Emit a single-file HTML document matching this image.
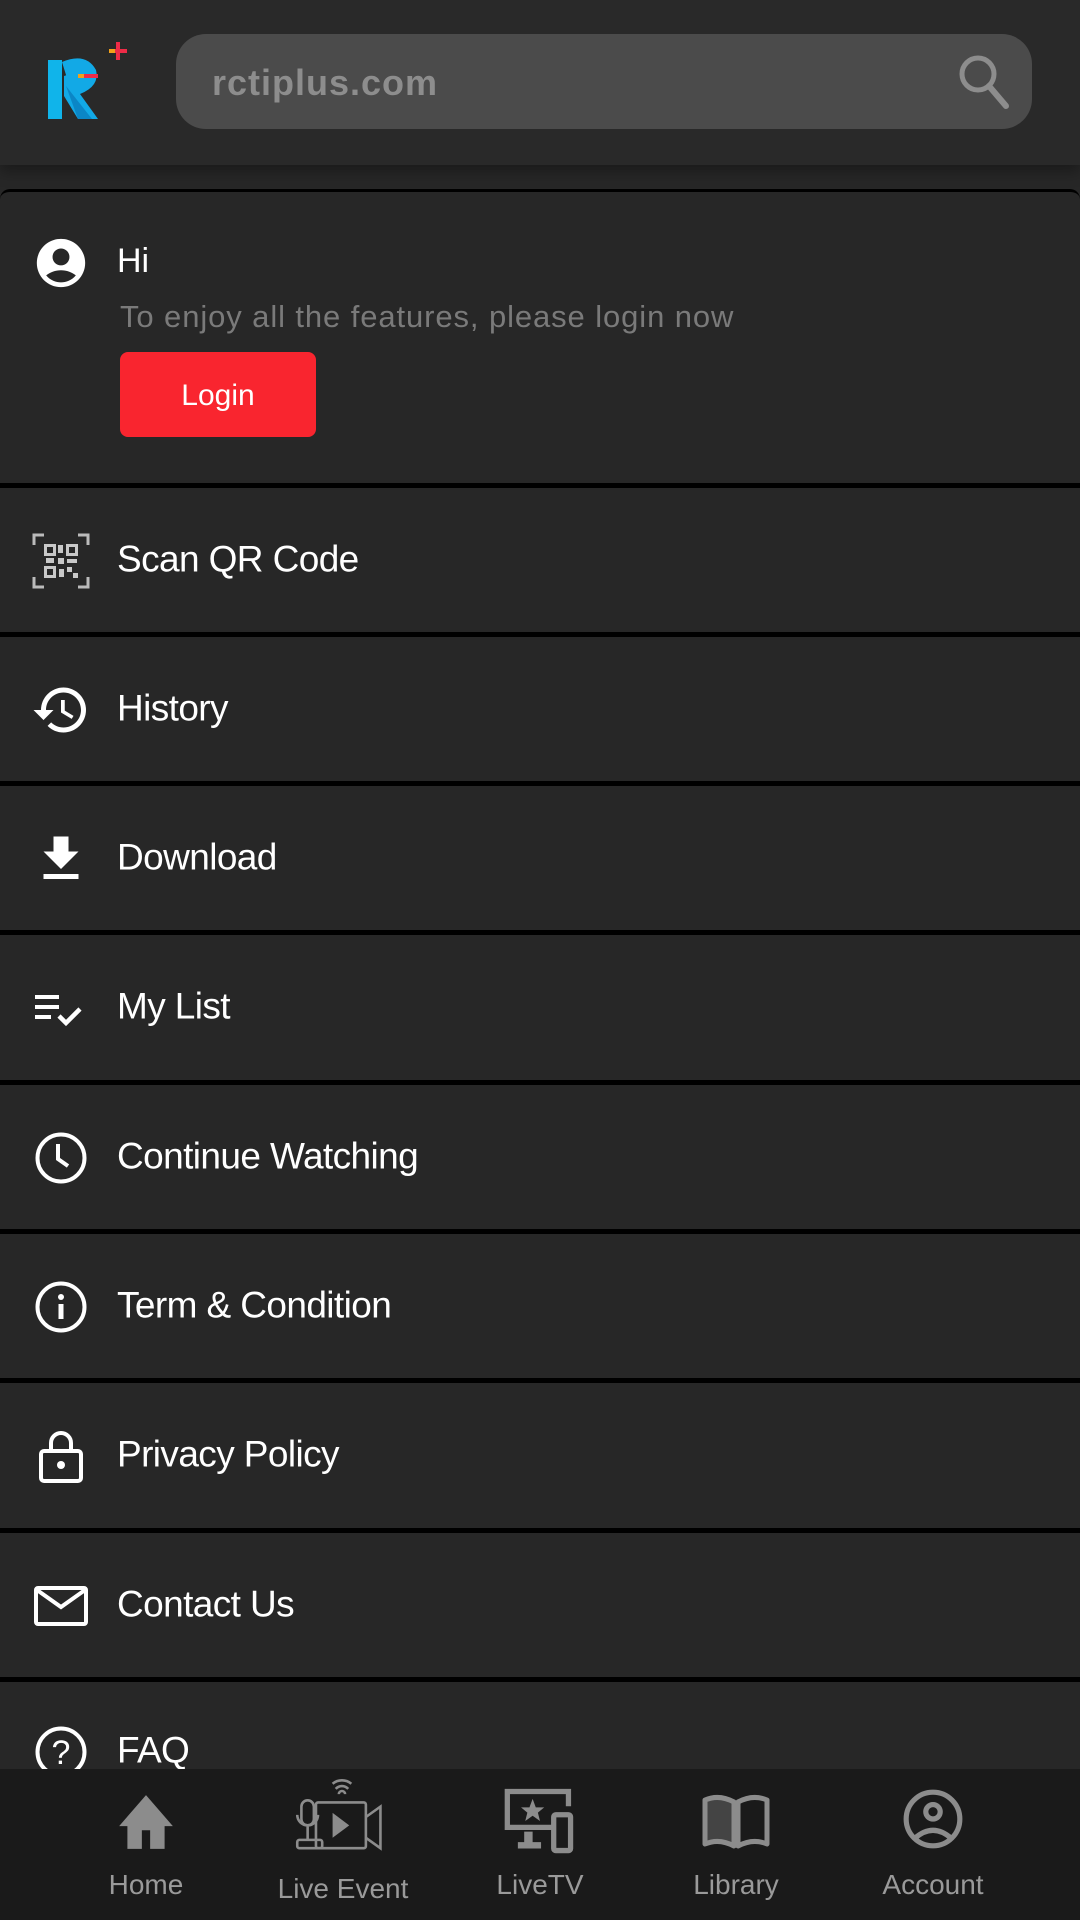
<!DOCTYPE html>
<html><head><meta charset="utf-8">
<style>
*{margin:0;padding:0;box-sizing:border-box}
body{width:1080px;height:1920px;overflow:hidden;background:#272727;font-family:"Liberation Sans",sans-serif;position:relative}
.hdr{position:absolute;left:0;top:0;width:1080px;height:165px;background:#292929;box-shadow:0 6px 14px rgba(0,0,0,.35);z-index:2}
.search{position:absolute;left:176px;top:34px;width:856px;height:95px;border-radius:30px;background:#4b4b4b}
.search span{position:absolute;left:36px;top:28px;font-size:36px;font-weight:bold;color:#8d8d8d;letter-spacing:1px}
.panel{position:absolute;left:0;top:189px;width:1080px;height:1600px;background:#272727;border-top:3px solid #000;border-radius:10px 10px 0 0}
.div{position:absolute;left:0;width:1080px;height:5px;background:#000}
.row{position:absolute;left:0;width:1080px;height:145px}
.row .t{position:absolute;left:117px;top:50%;transform:translateY(-54%);font-size:37px;letter-spacing:-0.6px;color:#fff}
.row svg{position:absolute;left:31px;top:50%;transform:translateY(-50%)}
.nav{position:absolute;left:0;top:1769px;width:1080px;height:151px;background:#1a1a1a}
.ni{position:absolute;top:0;width:200px;margin-left:-100px;text-align:center}
.ni svg{position:absolute;left:50%;transform:translateX(-50%)}
.ni span{position:absolute;left:0;width:200px;top:100px;font-size:28px;color:#9a9a9a;text-align:center}
</style></head><body>
<div class="hdr">
 <svg style="position:absolute;left:46px;top:40px" width="86" height="82" viewBox="0 0 86 82">
  <path d="M2 20 L16 20 L16 79 L2 79 Z" fill="#10b4ea"/>
  <path d="M16 22 Q40 12 50 30 Q54 46 34 54 L52 79 L32 79 L18 56 L18 36 Q34 30 32 42 L24 48 Z" fill="#12a9e6"/>
  <path d="M20 46 L46 79 L32 79 Z" fill="#0b86c6"/>
  <rect x="32" y="34" width="20" height="4" fill="#f2a11a"/>
  <rect x="38" y="34" width="14" height="4" fill="#ee2b47"/>
  <rect x="70" y="2" width="4" height="18" fill="#ee2b47"/>
  <rect x="63" y="9" width="18" height="4" fill="#ee2b47"/>
  <rect x="63" y="9" width="6" height="4" fill="#f2a11a"/>
 </svg>
 <div class="search"><span>rctiplus.com</span>
  <svg style="position:absolute;right:20px;top:18px" width="56" height="60" viewBox="0 0 56 60"><circle cx="22" cy="22" r="16" fill="none" stroke="#8d8d8d" stroke-width="5"/><path d="M33 34 L50 54" stroke="#8d8d8d" stroke-width="6" stroke-linecap="round"/></svg>
 </div>
</div>
<div class="panel"></div>
<svg style="position:absolute;left:32px;top:234px" width="58" height="58" viewBox="0 0 24 24"><path fill="#fff" d="M12 2C6.48 2 2 6.48 2 12s4.48 10 10 10 10-4.48 10-10S17.52 2 12 2zm0 4c1.93 0 3.5 1.57 3.5 3.5S13.93 13 12 13s-3.5-1.57-3.5-3.5S10.07 6 12 6zm0 14c-2.03 0-4.43-.82-6.14-2.88C7.55 15.8 9.68 15 12 15s4.45.8 6.14 2.12C16.43 19.18 14.03 20 12 20z"/></svg>
<div style="position:absolute;left:117px;top:242px;font-size:34px;color:#fff">Hi</div>
<div style="position:absolute;left:120px;top:299px;font-size:31px;letter-spacing:0.9px;color:#7a7a7a">To enjoy all the features, please login now</div>
<div style="position:absolute;left:120px;top:352px;width:196px;height:85px;background:#f9252f;border-radius:8px;color:#fff;font-size:30px;text-align:center;line-height:88px">Login</div>

<div class="div" style="top:483px"></div>
<div class="row" style="top:488px"><svg width="60" height="60" viewBox="0 0 60 60"><g fill="none" stroke="#bbb" stroke-width="3"><path d="M3 14V4h10M47 4h10v10M57 46v10H47M13 56H3V46"/></g><g fill="#c8c8c8"><rect x="13" y="13" width="12" height="12"/><rect x="35" y="13" width="12" height="12"/><rect x="13" y="35" width="12" height="12"/><rect x="27" y="27" width="6" height="6"/><rect x="36" y="36" width="5" height="5"/><rect x="42" y="42" width="5" height="5"/><rect x="27" y="14" width="5" height="8"/><rect x="15" y="27" width="8" height="5"/><rect x="36" y="28" width="10" height="4"/><rect x="28" y="38" width="5" height="8"/></g><g fill="#272727"><rect x="16" y="16" width="6" height="6"/><rect x="38" y="16" width="6" height="6"/><rect x="16" y="38" width="6" height="6"/></g></svg><span class="t">Scan QR Code</span></div>
<div class="div" style="top:632px"></div>
<div class="row" style="top:637px"><svg width="60" height="60" viewBox="0 0 24 24"><path fill="#fff" d="M13 3a9 9 0 0 0-9 9H1l3.89 3.89.07.14L9 12H6c0-3.870 3.13-7 7-7s7 3.13 7 7-3.13 7-7 7c-1.93 0-3.680-.79-4.940-2.060l-1.420 1.420A8.954 8.954 0 0 0 13 21a9 9 0 0 0 0-18zm-1 5v5l4.28 2.54.72-1.21-3.5-2.08V8H12z"/></svg><span class="t">History</span></div>
<div class="div" style="top:781px"></div>
<div class="row" style="top:786px"><svg width="60" height="60" viewBox="0 0 24 24"><path fill="#fff" d="M19 9h-4V3H9v6H5l7 7 7-7zM5 18v2h14v-2H5z"/></svg><span class="t">Download</span></div>
<div class="div" style="top:930px"></div>
<div class="row" style="top:935px"><svg width="60" height="60" viewBox="0 0 60 60"><g fill="#fff"><rect x="4" y="17" width="24" height="4"/><rect x="4" y="27" width="24" height="4"/><rect x="4" y="37" width="16" height="4"/></g><path d="M28 38l7 7 14-14" fill="none" stroke="#fff" stroke-width="4.5"/></svg><span class="t">My List</span></div>
<div class="div" style="top:1080px"></div>
<div class="row" style="top:1085px"><svg width="60" height="60" viewBox="0 0 60 60"><circle cx="30" cy="30" r="23.5" fill="none" stroke="#fff" stroke-width="4"/><path d="M27 16v15l10 7" fill="none" stroke="#fff" stroke-width="4"/></svg><span class="t">Continue Watching</span></div>
<div class="div" style="top:1229px"></div>
<div class="row" style="top:1234px"><svg width="60" height="60" viewBox="0 0 60 60"><circle cx="30" cy="30" r="23.5" fill="none" stroke="#fff" stroke-width="4"/><rect x="27.5" y="27" width="5" height="15" fill="#fff"/><circle cx="30" cy="20" r="3" fill="#fff"/></svg><span class="t">Term &amp; Condition</span></div>
<div class="div" style="top:1378px"></div>
<div class="row" style="top:1383px"><svg width="60" height="60" viewBox="0 0 60 60"><path d="M20 25v-8a10 10 0 0 1 20 0v8" fill="none" stroke="#fff" stroke-width="4"/><rect x="10" y="25" width="40" height="30" rx="3" fill="none" stroke="#fff" stroke-width="4"/><circle cx="30" cy="39" r="4" fill="#fff"/></svg><span class="t">Privacy Policy</span></div>
<div class="div" style="top:1528px"></div>
<div class="row" style="top:1533px"><svg width="60" height="60" viewBox="0 0 60 60"><rect x="5" y="12" width="50" height="36" rx="2" fill="none" stroke="#fff" stroke-width="4"/><path d="M6 14l24 17 24-17" fill="none" stroke="#fff" stroke-width="4"/></svg><span class="t">Contact Us</span></div>
<div class="div" style="top:1677px"></div>
<div class="row" style="top:1682px"><svg style="top:70px" width="60" height="60" viewBox="0 0 60 60"><circle cx="30" cy="30" r="23.5" fill="none" stroke="#fff" stroke-width="4"/><text x="30" y="42" font-size="34" fill="#fff" text-anchor="middle" font-family="Liberation Sans">?</text></svg><span class="t" style="top:70px">FAQ</span></div>

<div class="nav">
 <div class="ni" style="left:146px"><svg style="top:22px" width="64" height="62" viewBox="0 0 60 60"><path d="M30 4L4 34h8v22h14V38h8v18h14V34h8z" fill="#8c8c8c"/></svg><span>Home</span></div>
 <div class="ni" style="left:343px"><svg style="top:6px" width="104" height="84" viewBox="0 0 100 80"><g fill="none" stroke="#8c8c8c" stroke-width="2.5"><path d="M40 8a14 14 0 0 1 18 0M43 13a8 8 0 0 1 12 0M46 18a3 3 0 0 1 6 0"/><rect x="24" y="26" width="48" height="44" rx="2"/><path d="M72 40l14-10v40l-14-10"/><rect x="10" y="24" width="12" height="24" rx="6"/><path d="M6 38a10 10 0 0 0 20 0M16 48v14"/><rect x="6" y="62" width="24" height="8" rx="2"/></g><path d="M40 36l16 12-16 12z" fill="#8c8c8c"/></svg><span style="top:104px">Live Event</span></div>
 <div class="ni" style="left:540px"><svg style="top:16px" width="78" height="70" viewBox="0 0 74 66"><g fill="none" stroke="#8c8c8c" stroke-width="5"><path d="M48 40H6V6h58v14"/><rect x="50" y="28" width="16" height="34" rx="2"/></g><path d="M22 44h8v10h8v6H16v-6h6z" fill="#8c8c8c"/><path d="M30 13l3 8h8l-6 5 2 8-7-5-7 5 2-8-6-5h8z" fill="#8c8c8c"/></svg><span>LiveTV</span></div>
 <div class="ni" style="left:736px"><svg style="top:24px" width="70" height="58" viewBox="0 0 70 56"><path d="M4 6q14-6 29 2v44q-15-8-29-2z" fill="#444" stroke="#8c8c8c" stroke-width="5" stroke-linejoin="round"/><path d="M66 6q-14-6-29 2v44q15-8 29-2z" fill="none" stroke="#8c8c8c" stroke-width="5" stroke-linejoin="round"/></svg><span>Library</span></div>
 <div class="ni" style="left:933px"><svg style="top:18px" width="64" height="64" viewBox="0 0 62 62"><circle cx="31" cy="31" r="26" fill="none" stroke="#8c8c8c" stroke-width="5"/><circle cx="31" cy="24" r="7" fill="none" stroke="#8c8c8c" stroke-width="5"/><path d="M13 50q18-16 36 0" fill="none" stroke="#8c8c8c" stroke-width="5"/></svg><span>Account</span></div>
</div>
</body></html>
